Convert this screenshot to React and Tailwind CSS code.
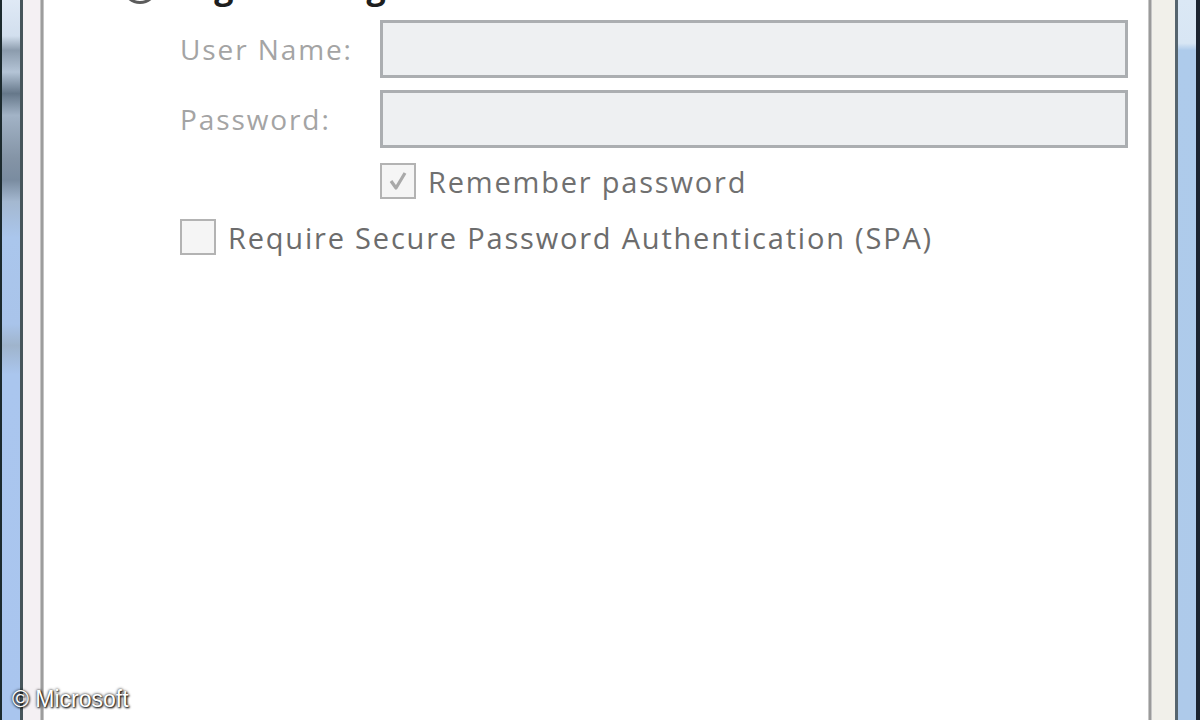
import React from 'react';

const font = { fontFamily: '"Open Sans", "Noto Sans", sans-serif' };

function Check({ checked }) {
  return (
    <div className="w-[36px] h-[36px] border-2 border-[#b3b3b3] bg-[#f5f5f5] flex items-center justify-center shrink-0">
      {checked && (
        <svg width="24" height="24" viewBox="0 0 24 24">
          <path d="M5 12 L10 19 L19 4" fill="none" stroke="#a9a9a9" strokeWidth="3.2" strokeLinejoin="round" />
        </svg>
      )}
    </div>
  );
}

function Field({ label }) {
  return (
    <div className="flex items-center">
      <div className="w-[200px] text-[28px] text-[#a4a4a4] tracking-[1.9px]">{label}</div>
      <div className="flex-1 h-[58px] border-[3px] border-[#abaeb1] bg-[#eef0f2]" />
    </div>
  );
}

export default function App() {
  return (
    <div className="relative flex h-[720px] w-[1200px] overflow-hidden bg-white" style={font}>
      {/* left window frame */}
      <div className="w-[2px] bg-[#1c2a2e]" />
      <div className="w-[18px] bg-[linear-gradient(to_bottom,#dfe9f5_0%,#d2dfee_5%,#8c9cad_7%,#b4c4d6_10%,#66788a_13%,#a2b3c6_16%,#8494a6_22%,#7a8ca0_25%,#a4b8d0_28%,#aac6ec_33%,#a9c4ea_45%,#9fb4cc_48%,#aac6ee_52%,#a9c5ee_100%)]" />
      <div className="w-[3px] bg-[#46555b]" />
      <div className="w-[17px] bg-[#f4f0f3]" />
      <div className="w-[4px] bg-[#9d9d9d] border-x border-[#c4c4c4]" />

      {/* dialog content */}
      <div className="flex-1 flex flex-col pl-[78px] pr-[20px]">
        <div className="flex items-center gap-[16px] mt-[-33px] h-[38px]">
          <div className="w-[36px] h-[36px] rounded-full border-[3px] border-[#5c5c5c] bg-white" />
          <span className="text-[34px] font-bold text-[#1e1e1e] leading-none">Log on using</span>
        </div>
        <div className="pl-[58px] flex flex-col mt-[15px]">
          <Field label="User Name:" />
          <div className="h-[12px]" />
          <Field label="Password:" />
          <div className="flex items-center gap-[12px] ml-[200px] mt-[15px]">
            <Check checked />
            <span className="text-[29px] text-[#707070] leading-none tracking-[1.8px]">Remember password</span>
          </div>
          <div className="flex items-center gap-[12px] mt-[20px]">
            <Check />
            <span className="text-[29px] text-[#6c6c6c] leading-none tracking-[1.8px]">Require Secure Password Authentication (SPA)</span>
          </div>
        </div>
      </div>

      {/* right window frame */}
      <div className="w-[4px] bg-[#9a9a9a] border-x border-[#c6c6c6]" />
      <div className="w-[23px] bg-[#f1f0ea]" />
      <div className="w-[3px] bg-[#56656f]" />
      <div className="w-[18px] bg-[linear-gradient(to_bottom,#dbe8f5_0%,#d8e6f4_6%,#aecbeb_7%,#aecaea_100%)]" />
      <div className="w-[4px] bg-[#1c2430]" />

      <div
        className="absolute left-[12px] bottom-[9px] text-[23px] text-white leading-none [text-shadow:0_0_3px_#000,1px_1px_2px_#000]"
        style={{ fontFamily: '"Liberation Sans", Arial, sans-serif' }}
      >
        © Microsoft
      </div>
    </div>
  );
}
